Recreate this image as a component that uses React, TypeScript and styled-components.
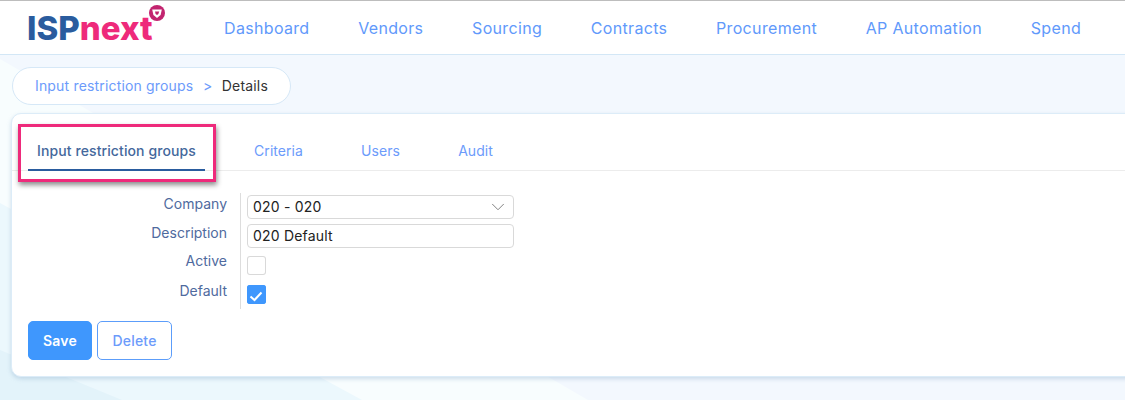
import { ChevronDown } from 'lucide-react'
import styled, { createGlobalStyle } from 'styled-components'

const GlobalStyle = createGlobalStyle`
    html, body {
        margin: 0;
        padding: 0;
        height: 400px;
        overflow: hidden;
        background: #fff;
        font-family: Inter, "Liberation Sans", sans-serif;
    }
`

const Page = styled.div`
    width: 1125px;
    height: 400px;
    overflow: hidden;
    position: relative;
    background: #f3f8fe;
`

// the pale diagonal shapes behind the page
const Facet = styled.div<{ $shape: string; $color: string }>`
    position: absolute;
    inset: 0;
    background: ${({ $color }) => $color};
    clip-path: polygon(${({ $shape }) => $shape});
`

const Content = styled.div`
    position: relative;
`

const Header = styled.header`
    height: 53px;
    display: flex;
    align-items: center;
    background: #fff;
    border-top: 1px solid #bdbdbd;
    border-bottom: 1px solid #d3e7f6;
`

const Logo = styled.div`
    position: relative;
    width: 195px;
    padding-left: 27px;
    box-sizing: border-box;
    font-size: 33px;
    font-weight: 800;
    line-height: 36px;
`

const LogoIsp = styled.span`
    color: #2a5c9e;
`

const LogoNext = styled.span`
    color: #ee2a7b;
`

const LogoBadge = styled.svg`
    position: absolute;
    left: 149px;
    top: -5px;
    width: 16px;
    height: 16px;
`

const Nav = styled.nav`
    display: flex;
    gap: 48.7px;
    margin-left: 29px;
`

const NavLink = styled.a`
    font-size: 16px;
    letter-spacing: 0.33px;
    color: #6199fb;
    white-space: nowrap;
`

const Crumbs = styled.div`
    margin: 12px 0 8px 12px;
    width: 279px;
    height: 38px;
    box-sizing: border-box;
    padding: 0 0 1px 22px;
    display: flex;
    align-items: center;
    gap: 9.5px;
    font-size: 14px;
    letter-spacing: 0.17px;
    background: #fff;
    border: 1px solid #d6e8f7;
    border-radius: 19px;
`

const CrumbLink = styled.span`
    color: #6c9bfb;
`

const CrumbSep = styled.span`
    color: #6c9bfb;
`

const CrumbCurrent = styled.span`
    color: #333;
`

const Card = styled.section`
    margin-left: 11px;
    width: 1140px;
    height: 264px;
    box-sizing: border-box;
    background: #fff;
    border: 1px solid #dcecf8;
    border-radius: 10px;
    box-shadow: 0 2px 4px rgba(140, 175, 205, 0.4);
    padding: 0 0 0 16px;
`

const Tabs = styled.div`
    height: 56px;
    display: flex;
    align-items: flex-end;
    margin-left: -16px;
    padding-left: 16px;
    border-bottom: 1px solid #ececec;
`

const Tab = styled.div<{ $active?: boolean; $width: number }>`
    width: ${({ $width }) => $width}px;
    height: 38px;
    box-sizing: border-box;
    text-align: center;
    line-height: 36px;
    font-size: 14px;
    letter-spacing: ${({ $active }) => ($active ? 0.1 : 0.05)}px;
    font-weight: ${({ $active }) => ($active ? 500 : 400)};
    color: ${({ $active }) => ($active ? '#44689c' : '#6c9bfb')};
    border-bottom: ${({ $active }) => ($active ? '2px solid #2a5c9e' : 'none')};
    margin-bottom: -1px;
`

const Highlight = styled.div`
    position: absolute;
    left: 18px;
    top: 124px;
    width: 198px;
    height: 58px;
    box-sizing: border-box;
    border: 3px solid #ee2a7b;
    box-shadow: 1px 3px 5px rgba(0, 0, 0, 0.45);
`

const Form = styled.div`
    display: grid;
    grid-template-columns: 200px 1fr;
    margin-top: 22px;
`

const Labels = styled.div`
    width: 213px;
    margin-right: -13px;
    padding: 1px 13px 0 0;
    box-sizing: border-box;
    border-right: 1px solid #ddd;
    height: 116px;
`

const Label = styled.div<{ $height: number }>`
    height: ${({ $height }) => $height}px;
    text-align: right;
    font-size: 14px;
    line-height: 20px;
    color: #4f6a9e;
`

const Fields = styled.div`
    margin-left: 19px;
    padding-top: 2px;
    display: flex;
    flex-direction: column;
    align-items: flex-start;
`

const Field = styled.div`
    width: 267px;
    height: 24px;
    box-sizing: border-box;
    padding: 0 4px 1px 5px;
    margin-bottom: 5px;
    display: flex;
    align-items: center;
    justify-content: space-between;
    font-size: 14px;
    letter-spacing: 0.2px;
    color: #222;
    border: 1px solid #d9d9d9;
    border-radius: 4px;
`

const Check = styled.div<{ $checked?: boolean }>`
    width: 19px;
    height: 19px;
    box-sizing: border-box;
    margin: 3px 0 7px;
    border-radius: 3px;
    background: ${({ $checked }) => ($checked ? '#3f97fd' : '#fff')};
    box-shadow: inset 0 0 0 1px ${({ $checked }) => ($checked ? '#3f97fd' : '#d9d9d9')};
`

const CheckMark = styled.svg`
    display: block;
    width: 19px;
    height: 19px;
`

const Actions = styled.div`
    display: flex;
    gap: 5px;
    margin: 10px 0 0;
`

const Button = styled.button<{ $primary?: boolean }>`
    height: 39px;
    width: ${({ $primary }) => ($primary ? 64 : 75)}px;
    padding: 0;
    font-family: inherit;
    font-size: 14px;
    font-weight: ${({ $primary }) => ($primary ? 600 : 500)};
    letter-spacing: 0.2px;
    border-radius: 5px;
    color: ${({ $primary }) => ($primary ? '#fff' : '#6c9bfb')};
    background: ${({ $primary }) => ($primary ? '#3f97fd' : '#fff')};
    border: 1px solid ${({ $primary }) => ($primary ? '#3f97fd' : '#5c9dfa')};
`

const navItems = ['Dashboard', 'Vendors', 'Sourcing', 'Contracts', 'Procurement', 'AP Automation', 'Spend']

const tabs = [
    { name: 'Input restriction groups', width: 177, active: true },
    { name: 'Criteria', width: 147 },
    { name: 'Users', width: 57 },
    { name: 'Audit', width: 133 }
]

export default function App() {
    return (
        <Page>
            <GlobalStyle />
            <Facet $color="#f8fdfe" $shape="0 59px, 588px 400px, 0 400px" />
            <Facet $color="#ecf8fd" $shape="0 203px, 362px 400px, 0 400px" />
            <Facet $color="#e3f3fa" $shape="0 350px, 122px 400px, 0 400px" />
            <Content>
                <Header>
                    <Logo>
                        <LogoIsp>ISP</LogoIsp>
                        <LogoNext>next</LogoNext>
                        <LogoBadge viewBox="0 0 16 16">
                            <circle cx="8" cy="8" r="8" fill="#c2246f" />
                            <path d="M3.2 4.5 H12.8 L11.6 10 L8 13 L4.4 10 Z" fill="#fff" />
                            <path d="M6 6.5 H10.2 L9.4 9 L8 10 L6.6 9 Z" fill="#c2246f" />
                        </LogoBadge>
                    </Logo>
                    <Nav>
                        {navItems.map(item => (
                            <NavLink key={item}>{item}</NavLink>
                        ))}
                    </Nav>
                </Header>
                <Crumbs>
                    <CrumbLink>Input restriction groups</CrumbLink>
                    <CrumbSep>&gt;</CrumbSep>
                    <CrumbCurrent>Details</CrumbCurrent>
                </Crumbs>
                <Card>
                    <Tabs>
                        {tabs.map(tab => (
                            <Tab key={tab.name} $active={tab.active} $width={tab.width}>
                                {tab.name}
                            </Tab>
                        ))}
                    </Tabs>
                    <Form>
                        <Labels>
                            <Label $height={29}>Company</Label>
                            <Label $height={28}>Description</Label>
                            <Label $height={30}>Active</Label>
                            <Label $height={28}>Default</Label>
                        </Labels>
                        <Fields>
                            <Field>
                                020 - 020
                                <ChevronDown size={22} color="#777" strokeWidth={1} />
                            </Field>
                            <Field>020 Default</Field>
                            <Check />
                            <Check $checked>
                                <CheckMark viewBox="0 0 19 19">
                                    <path d="M3.5 11.5 L7.5 15 L14.5 7.5" fill="none" stroke="#fff" strokeWidth="2" />
                                </CheckMark>
                            </Check>
                        </Fields>
                    </Form>
                    <Actions>
                        <Button $primary>Save</Button>
                        <Button>Delete</Button>
                    </Actions>
                </Card>
            </Content>
            <Highlight />
        </Page>
    )
}
